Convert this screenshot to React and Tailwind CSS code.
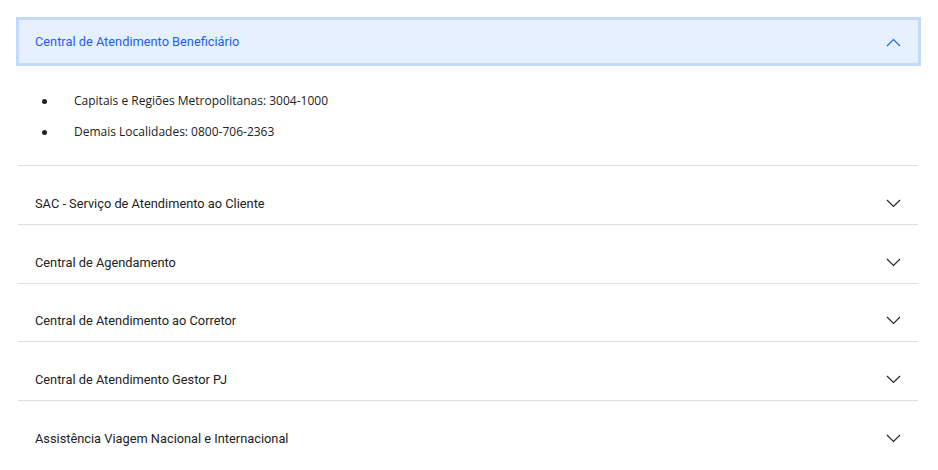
import React, { useState } from 'react';

const items = [
    'Central de Atendimento Beneficiário',
    'SAC - Serviço de Atendimento ao Cliente',
    'Central de Agendamento',
    'Central de Atendimento ao Corretor',
    'Central de Atendimento Gestor PJ',
    'Assistência Viagem Nacional e Internacional',
];

const Chevron = ({ up }) => (
    <svg width="15" height="9" viewBox="0 0 15 9" fill="none" className="shrink-0">
        <path
            d={up ? 'M1 8L7.5 1.5 14 8' : 'M1 1l6.5 6.5L14 1'}
            stroke="currentColor"
            strokeWidth="1.1"
        />
    </svg>
);

const App = () => {
    const [open, setOpen] = useState(0);

    return (
        <div className="w-[938px] h-[470px] overflow-hidden bg-white pt-[17px] pl-[16px] text-[12.8px] font-['Roboto','Liberation_Sans',sans-serif]">
            {items.map((label, i) =>
                i === open ? (
                    <div key={label} className="w-[905px]">
                        <button
                            onClick={() => setOpen(-1)}
                            className="w-full h-[49px] flex items-center justify-between border-[3px] border-[#c3d9fd] bg-[#e7f0ff] pl-[16px] pr-[17px] pt-[1px] text-[#1c5ff0]"
                        >
                            <span>{label}</span>
                            <Chevron up />
                        </button>
                        <ul className="ml-[2px] w-[900px] border-b border-[#e0e0e0] pt-[24px] pb-[22px] text-[#222] font-['Open_Sans','Noto_Sans',sans-serif] text-[12px]">
                            <li className="flex items-center h-[22px] mb-[9px]">
                                <span className="w-[5px] h-[5px] rounded-full bg-[#222] ml-[24px] mr-[27px]" />
                                Capitais e Regiões Metropolitanas: 3004-1000
                            </li>
                            <li className="flex items-center h-[22px]">
                                <span className="w-[5px] h-[5px] rounded-full bg-[#222] ml-[24px] mr-[27px]" />
                                Demais Localidades: 0800-706-2363
                            </li>
                        </ul>
                    </div>
                ) : (
                    <button
                        key={label}
                        onClick={() => setOpen(i)}
                        className={`ml-[2px] w-[900px] h-[58.75px] flex items-center justify-between pt-[17px] pl-[17px] pr-[17px] text-[#222] text-left ${i === items.length - 1 ? '' : 'border-b border-[#e0e0e0]'}`}
                    >
                        <span>{label}</span>
                        <Chevron />
                    </button>
                )
            )}
        </div>
    );
};

export default App;
